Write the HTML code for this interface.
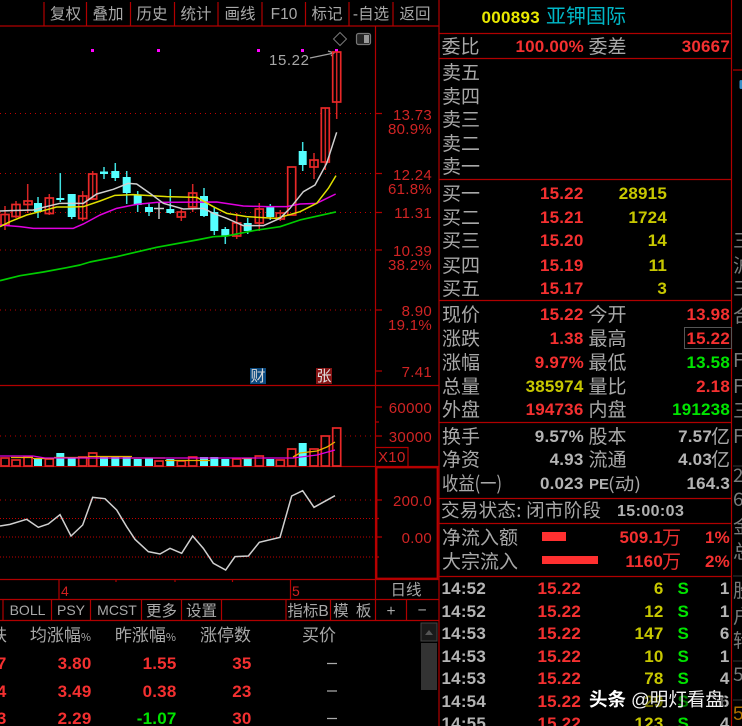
<!DOCTYPE html>
<html><head><meta charset="utf-8"><style>
html,body{margin:0;padding:0;background:#000;width:742px;height:726px;overflow:hidden}
svg{display:block}
text{font-family:"Liberation Sans","Noto Sans CJK SC",sans-serif}
.t{font-family:"Liberation Sans","Noto Sans CJK SC",sans-serif;font-size:15.5px;fill:#a8a8a8;text-anchor:middle}
.a{font-size:15px;fill:#d02424;text-anchor:end;letter-spacing:.3px}
.l{font-family:"Noto Sans CJK SC",sans-serif;font-size:19px;fill:#a8a8a8}
.n{font-weight:bold;font-size:17px;text-anchor:end;letter-spacing:.2px}
.R{fill:#f43030}.Y{fill:#c8c800}.G{fill:#00e400}.W{fill:#b4b4b4}
.h{font-family:"Noto Sans CJK SC",sans-serif;font-size:17px;fill:#a8a8a8;text-anchor:end}
.h tspan{font-size:11px}
.ln{stroke:#b00000;stroke-width:1.200;fill:none}
.d{stroke:#c00000;stroke-width:1;stroke-dasharray:1 4;fill:none}
.rb{fill:none;stroke:#e82828;stroke-width:1.700}
.cb{fill:#55ffff}
.s{font-family:"Noto Sans CJK SC",sans-serif;font-size:19px;fill:#7a7a7a}
</style></head><body>
<svg width="742" height="726" viewBox="0 0 742 726" xmlns="http://www.w3.org/2000/svg">
<rect width="742" height="726" fill="#000"/>

<!-- toolbar -->
<path class="ln" d="M0 26H439M44 2V26M86.500 2V26M130.500 2V26M174.500 2V26M218 2V26M262 2V26M305.500 2V26M349 2V26M393 2V26"/>
<text class="t" x="65.500" y="19">复权</text><text class="t" x="108" y="19">叠加</text><text class="t" x="152" y="19">历史</text><text class="t" x="196" y="19">统计</text><text class="t" x="240" y="19">画线</text><text class="t" x="284" y="19">F10</text><text class="t" x="327" y="19">标记</text><text class="t" x="371" y="19">-自选</text><text class="t" x="415" y="19">返回</text>

<!-- frame -->
<path class="ln" d="M375.500 26V600M0 385.500H439M0 466.500H439M0 579.500H439M0 599.500H439M0 620.500H439"/>
<path d="M376.500 467.500H437.500V578.500H376.500Z" fill="none" stroke="#b80000" stroke-width="1.800"/>
<path class="ln" d="M376 447.500H408V466"/>
<path class="ln" d="M439 0V726M731.500 0V726M439 33.500H731M439 58.500H731M439 179.500H731M439 300.500H731M439 422.500H731M439 498.500H731M439 523.500H731M439 576.500H731"/>

<!-- dotted grid -->
<path class="d" d="M0 113.500H375M0 173.500H375M0 212.500H375M0 250H375M0 310H375M0 436H375M0 500H375"/>
<path d="M0 518.500H376M0 537H376M0 557H376" stroke="#c00000" stroke-width="1" stroke-dasharray="1 2" fill="none"/>
<path class="ln" d="M376 113.500H382M376 173.500H382M376 212.500H382M376 250H382M376 310H382M376 371H382M376 407H382M376 422H379M376 436H382M376 500H382M376 518.500H379M376 537H382M376 557H379"/>

<!-- axis labels -->
<text class="a" x="432" y="120">13.73</text><text class="a" x="432" y="134">80.9%</text>
<text class="a" x="432" y="180">12.24</text><text class="a" x="432" y="194">61.8%</text>
<text class="a" x="432" y="218">11.31</text>
<text class="a" x="432" y="256">10.39</text><text class="a" x="432" y="270">38.2%</text>
<text class="a" x="432" y="316">8.90</text><text class="a" x="432" y="330">19.1%</text>
<text class="a" x="432" y="377">7.41</text>
<text class="a" x="432" y="413">60000</text><text class="a" x="432" y="442">30000</text>
<text class="a" x="378" y="462" style="text-anchor:start">X10</text>
<text class="a" x="432" y="506">200.0</text><text class="a" x="432" y="543">0.00</text>

<!-- high marker -->
<text x="269" y="65" style="font-size:15px;fill:#a8a8a8;letter-spacing:.6px">15.22</text>
<path d="M310 58L334 53M328 51L334 53L331 56" stroke="#a0a0a0" stroke-width="1.200" fill="none"/>
<path d="M340 32.500L346.500 39L340 45.500L333.500 39Z" fill="none" stroke="#777" stroke-width="1"/>
<rect x="356.500" y="33.500" width="14" height="11" rx="2" fill="#222" stroke="#777" stroke-width="1.200"/><rect x="364" y="35" width="5" height="8" fill="#999"/>
<g fill="#ff00ff"><rect x="91" y="49" width="3" height="3"/><rect x="157" y="49" width="3" height="3"/><rect x="257" y="49" width="3" height="3"/><rect x="301" y="49" width="3" height="3"/><rect x="335" y="49" width="3" height="3"/></g>

<!-- wicks -->
<path stroke="#d42424" stroke-width="1.500" fill="none" d="M5 206V230M16 201V218M27.700 184V213M49.300 194V215M82.700 191V221M92.700 171V200M181.300 209V221M192.700 184V212M236.700 213V239M259.300 203V231M280.300 210V221M314 153V179M325.300 108V170M336.700 52V119"/>
<path stroke="#40e0e0" stroke-width="1.500" fill="none" d="M38 197V218M60.300 173V202M71.700 194V219M104 167V179M115.300 163V181M126.700 171V204M137.700 191V212M149 203V216M170.300 189V214M204 188V217M214.300 207V235M225.300 227V244M247.700 218V234M270.300 204V220M302.700 142V171"/>
<path stroke="#d0d0d0" stroke-width="1.400" fill="none" d="M159 202V219M154 208.500H164"/>
<!-- bodies -->
<g class="rb">
<rect x="1" y="214.500" width="8" height="10.500"/><rect x="12" y="204.500" width="8" height="12"/><rect x="24" y="201" width="8" height="3.500"/><rect x="45.300" y="198" width="8" height="15.500"/><rect x="78.700" y="196" width="8" height="22.500"/><rect x="88.700" y="174" width="8" height="25"/><rect x="177.300" y="212" width="8" height="5"/><rect x="188.700" y="193" width="8" height="14"/><rect x="232.700" y="223" width="8" height="13"/><rect x="255.300" y="209" width="8" height="14"/><rect x="276.300" y="213" width="8" height="6"/><rect x="287.700" y="167" width="8" height="48"/><rect x="310" y="160" width="8" height="7"/><rect x="321.300" y="108" width="8" height="54"/><rect x="332.700" y="52" width="8" height="50"/>
</g>
<g class="cb">
<rect x="34" y="203" width="8" height="9"/><rect x="56.300" y="198" width="8" height="2"/><rect x="67.700" y="194" width="8" height="23"/><rect x="100" y="171.500" width="8" height="2.500"/><rect x="111.300" y="171" width="8" height="7"/><rect x="122.700" y="177" width="8" height="16"/><rect x="133.700" y="195" width="8" height="10"/><rect x="145" y="207" width="8" height="5"/><rect x="166.300" y="209" width="8" height="4"/><rect x="200" y="196" width="8" height="20"/><rect x="210.300" y="212" width="8" height="19"/><rect x="221.300" y="229" width="8" height="7"/><rect x="243.700" y="223" width="8" height="8"/><rect x="266.300" y="207" width="8" height="10"/><rect x="298.700" y="151" width="8" height="14"/>
</g>

<!-- moving averages -->
<g transform="scale(.33333)" fill="none" stroke-width="4.500" stroke-linejoin="round">
<polyline stroke="#00cc00" stroke-width="5" points="0,842 60,827 130,816 200,803 240,795 270,786 350,770 470,742 590,720 640,710 680,708 760,692 840,680 900,660 1008,636"/>
<polyline stroke="#e000e0" points="0,675 60,680 100,685 220,685 250,672 300,645 350,625 410,613 470,607 650,606 730,618 800,620 860,620 900,612 950,610 1007,582"/>
<polyline stroke="#e0e000" points="0,680 30,665 80,645 130,632 170,621 210,621 250,620 300,603 345,586 400,584 500,590 590,592 640,620 680,640 740,650 830,655 900,635 950,610 985,565 1008,527"/>
<polyline stroke="#d0d0d0" points="0,633 30,632 100,630 130,622 180,610 250,610 290,582 340,568 385,550 410,552 450,580 490,610 550,627 610,625 640,640 680,655 730,677 790,677 840,655 870,625 910,575 945,555 980,490 1010,397"/>
</g>

<!-- badges -->
<rect x="250" y="368" width="16" height="16" fill="#0b4a80"/><text x="258" y="381" style="font-size:15px;fill:#d8d8d8;text-anchor:middle">财</text>
<rect x="316" y="368" width="16" height="16" fill="#861414"/><text x="324" y="381" style="font-size:15px;fill:#e0e0e0;text-anchor:middle">张</text>

<!-- volume -->
<g class="rb">
<rect x="1" y="458" width="8" height="8"/><rect x="12" y="460" width="8" height="6"/><rect x="24" y="457" width="8" height="9"/><rect x="45.300" y="459" width="8" height="7"/><rect x="78.700" y="457" width="8" height="9"/><rect x="88.700" y="453" width="8" height="13"/><rect x="155" y="461" width="8" height="5"/><rect x="177.300" y="461" width="8" height="5"/><rect x="188.700" y="457" width="8" height="9"/><rect x="232.700" y="459" width="8" height="7"/><rect x="255.300" y="456" width="8" height="10"/><rect x="276.300" y="460" width="8" height="6"/><rect x="287.700" y="449" width="8" height="17"/><rect x="310" y="449" width="8" height="17"/><rect x="321.300" y="436" width="8" height="30"/><rect x="332.700" y="428" width="8" height="38"/>
</g>
<g class="cb">
<rect x="34" y="458" width="8" height="8"/><rect x="56.300" y="453" width="8" height="13"/><rect x="67.700" y="458" width="8" height="8"/><rect x="100" y="457" width="8" height="9"/><rect x="111.300" y="457" width="8" height="9"/><rect x="122.700" y="457" width="8" height="9"/><rect x="133.700" y="459" width="8" height="7"/><rect x="145" y="458" width="8" height="8"/><rect x="166.300" y="459" width="8" height="7"/><rect x="200" y="457" width="8" height="9"/><rect x="210.300" y="457" width="8" height="9"/><rect x="221.300" y="459" width="8" height="7"/><rect x="243.700" y="459" width="8" height="7"/><rect x="266.300" y="459" width="8" height="7"/><rect x="298.700" y="443" width="8" height="23"/>
</g>
<path fill="none" stroke="#e8b000" stroke-width="1.300" d="M11 457.500H33M33 458.500H54M54 457.500H88M88 456.500H132M132 458H165M165 460.500H210M242 458.500H252M293 457L300 453L317 451L327 447L335 442"/>
<path fill="none" stroke="#e000e0" stroke-width="1.300" d="M0 456H33L45 458H293L317 455L335 450"/>

<!-- CCI -->
<g transform="translate(0 480) scale(.33333)"><polyline fill="none" stroke="#d0d0d0" stroke-width="4.500" points="0,138 30,133 80,118 115,142 145,132 180,104 213,168 248,135 278,52 315,56 350,90 380,140 405,178 445,215 480,222 510,205 545,220 578,168 610,205 640,250 677,270 705,230 745,228 778,187 840,172 875,48 908,32 942,82 1005,47"/></g>

<!-- date row -->
<path class="ln" d="M59 580V599M290.500 580V599M116 580V582M175 580V582M232.500 580V582"/>
<text x="61" y="596" style="font-size:14px;fill:#d02020">4</text><text x="292" y="596" style="font-size:14px;fill:#d02020">5</text>
<text class="t" x="406" y="595">日线</text>

<!-- tab row -->
<path class="ln" d="M3 600V620M51.500 600V620M90.500 600V620M141.500 600V620M181.500 600V620M221.500 600V620M286 600V620M330.500 600V620M375.500 600V620M406.500 600V620"/>
<text class="t" x="27.500" y="615" style="font-size:14px">BOLL</text><text class="t" x="71" y="615" style="font-size:14px">PSY</text><text class="t" x="117" y="615" style="font-size:14px">MCST</text><text class="t" x="161.500" y="616">更多</text><text class="t" x="201.500" y="616">设置</text><text class="t" x="308" y="616">指标B</text><text class="t" x="353" y="616" style="letter-spacing:1.500px">模 板</text><text class="t" x="391" y="616">+</text><text class="t" x="422" y="615">−</text>

<!-- table -->
<text class="h" x="7" y="641">跌</text><text class="h" x="91" y="641">均涨幅<tspan>%</tspan></text><text class="h" x="176" y="641">昨涨幅<tspan>%</tspan></text><text class="h" x="251" y="641">涨停数</text><text class="h" x="336" y="641">买价</text>
<text class="n R" x="6.500" y="669">7</text><text class="n R" x="91.500" y="669">3.80</text><text class="n R" x="176.500" y="669">1.55</text><text class="n R" x="251.500" y="669">35</text>
<text class="n R" x="6.500" y="697">4</text><text class="n R" x="91.500" y="697">3.49</text><text class="n R" x="176.500" y="697">0.38</text><text class="n R" x="251.500" y="697">23</text>
<text class="n R" x="6.500" y="724">3</text><text class="n R" x="91.500" y="724">2.29</text><text class="n G" x="176.500" y="724">-1.07</text><text class="n R" x="251.500" y="724">30</text>
<path d="M327 663.500H337M327 691H337M327 718.500H337" stroke="#aaa" stroke-width="1.200"/>
<rect x="421" y="623" width="16" height="18" fill="#1a1a1a" stroke="#444"/><path d="M425 635L429 630L433 635Z" fill="#555"/><rect x="421" y="643" width="16" height="47" fill="#333"/>

<!-- stock title -->
<text x="481.500" y="23" style="font-weight:bold;font-size:17px;fill:#e8e800;letter-spacing:.3px">000893</text>
<text x="546" y="23" style="font-family:'Noto Sans CJK SC',sans-serif;font-size:20px;fill:#00b8c8">亚钾国际</text>

<!-- quotes -->
<text class="l" x="441.500" y="53">委比</text><text class="n R" x="584" y="52">100.00%</text><text class="l" x="588.500" y="53">委差</text><text class="n R" x="730" y="52">30667</text>
<text class="l" x="442" y="79">卖五</text><text class="l" x="442" y="103">卖四</text><text class="l" x="442" y="126">卖三</text><text class="l" x="442" y="150">卖二</text><text class="l" x="442" y="173">卖一</text>
<text class="l" x="442" y="200">买一</text><text class="n R" x="583.500" y="199">15.22</text><text class="n Y" x="667" y="199">28915</text>
<text class="l" x="442" y="224">买二</text><text class="n R" x="583.500" y="223">15.21</text><text class="n Y" x="667" y="223">1724</text>
<text class="l" x="442" y="247">买三</text><text class="n R" x="583.500" y="246">15.20</text><text class="n Y" x="667" y="246">14</text>
<text class="l" x="442" y="272">买四</text><text class="n R" x="583.500" y="271">15.19</text><text class="n Y" x="667" y="271">11</text>
<text class="l" x="442" y="295">买五</text><text class="n R" x="583.500" y="294">15.17</text><text class="n Y" x="667" y="294">3</text>

<text class="l" x="442" y="321">现价</text><text class="n R" x="583.500" y="320">15.22</text><text class="l" x="588.500" y="321">今开</text><text class="n R" x="730" y="320">13.98</text>
<text class="l" x="442" y="345">涨跌</text><text class="n R" x="583.500" y="344">1.38</text><text class="l" x="588.500" y="345">最高</text><rect x="684.500" y="327.500" width="47" height="21" fill="none" stroke="#555"/><text class="n R" x="730" y="344">15.22</text>
<text class="l" x="442" y="369">涨幅</text><text class="n R" x="584" y="368">9.97%</text><text class="l" x="588.500" y="369">最低</text><text class="n G" x="730" y="368">13.58</text>
<text class="l" x="442" y="393">总量</text><text class="n Y" x="583.500" y="392">385974</text><text class="l" x="588.500" y="393">量比</text><text class="n R" x="730" y="392">2.18</text>
<text class="l" x="442" y="416">外盘</text><text class="n R" x="583.500" y="415">194736</text><text class="l" x="588.500" y="416">内盘</text><text class="n G" x="730" y="415">191238</text>

<text class="l" x="442" y="443">换手</text><text class="n W" x="584" y="442">9.57%</text><text class="l" x="588.500" y="443">股本</text><text class="n W" x="712" y="442">7.57</text><text class="l" x="711" y="443">亿</text>
<text class="l" x="442" y="466">净资</text><text class="n W" x="583.500" y="465">4.93</text><text class="l" x="588.500" y="466">流通</text><text class="n W" x="712" y="465">4.03</text><text class="l" x="711" y="466">亿</text>
<text class="l" x="442" y="490" textLength="60" lengthAdjust="spacingAndGlyphs">收益(一)</text><text class="n W" x="583.500" y="489">0.023</text><text x="589" y="489" style="font-weight:bold;font-size:15px;fill:#b0b0b0">PE</text><text class="l" x="608" y="490" style="font-size:17px" textLength="33" lengthAdjust="spacingAndGlyphs">(动)</text><text class="n W" x="730" y="489">164.3</text>

<text class="l" x="441" y="517" style="font-size:18.500px;letter-spacing:.3px">交易状态: 闭市阶段</text>
<text x="617" y="516" style="font-weight:bold;font-size:16px;fill:#b0b0b0;letter-spacing:.4px">15:00:03</text>

<text class="l" x="442" y="544">净流入额</text><rect x="542" y="532" width="24" height="9" fill="#ff3030"/><text class="n R" x="663" y="543">509.1</text><text class="l" x="662" y="544" style="fill:#f03030">万</text><text class="n R" x="730" y="543">1%</text>
<text class="l" x="442" y="568">大宗流入</text><rect x="542" y="556" width="56" height="8" fill="#ff3030"/><text class="n R" x="663" y="567">1160</text><text class="l" x="662" y="568" style="fill:#f03030">万</text><text class="n R" x="730" y="567">2%</text>

<!-- ticks -->
<g>
<text class="n W" x="486" y="594">14:52</text><text class="n R" x="581" y="594">15.22</text><text class="n Y" x="663.500" y="594">6</text><text class="n G" x="689" y="594">S</text><text class="n W" x="729.500" y="594">1</text>
<text class="n W" x="486" y="617">14:52</text><text class="n R" x="581" y="617">15.22</text><text class="n Y" x="663.500" y="617">12</text><text class="n G" x="689" y="617">S</text><text class="n W" x="729.500" y="617">1</text>
<text class="n W" x="486" y="639">14:53</text><text class="n R" x="581" y="639">15.22</text><text class="n Y" x="663.500" y="639">147</text><text class="n G" x="689" y="639">S</text><text class="n W" x="729.500" y="639">6</text>
<text class="n W" x="486" y="662">14:53</text><text class="n R" x="581" y="662">15.22</text><text class="n Y" x="663.500" y="662">10</text><text class="n G" x="689" y="662">S</text><text class="n W" x="729.500" y="662">1</text>
<text class="n W" x="486" y="684">14:53</text><text class="n R" x="581" y="684">15.22</text><text class="n Y" x="663.500" y="684">78</text><text class="n G" x="689" y="684">S</text><text class="n W" x="729.500" y="684">4</text>
<text class="n W" x="486" y="707">14:54</text><text class="n R" x="581" y="707">15.22</text><text class="n Y" x="663.500" y="707">29</text><text class="n G" x="689" y="707">S</text><text class="n W" x="729.500" y="707">6</text>
<text class="n W" x="486" y="729">14:55</text><text class="n R" x="581" y="729">15.22</text><text class="n Y" x="663.500" y="729">123</text><text class="n G" x="689" y="729">S</text><text class="n W" x="729.500" y="729">4</text>
</g>

<!-- watermark -->
<rect x="630" y="690" width="95" height="20" fill="#000" opacity=".45"/>
<text x="589" y="706" style="font-family:'Noto Sans CJK SC',sans-serif;font-size:18.500px;fill:#fff;font-weight:bold">头条</text>
<text x="631" y="706" style="font-family:'Liberation Sans','Noto Sans CJK SC',sans-serif;font-size:18.500px;fill:#f4f4f4">@明灯看盘</text>

<!-- clipped neighbouring panel -->
<path class="ln" d="M733 70H742"/>
<rect x="739.500" y="80" width="3" height="9" rx="1.500" fill="#3a90c8"/>
<g class="s">
<text x="733" y="247" class="s">三</text><text x="733" y="272" class="s">沪</text><text x="733" y="295" class="s">三</text><text x="733" y="322" class="s">合</text>
<text x="733" y="367" class="s">F</text><text x="733" y="393" class="s">F</text><text x="733" y="417" class="s">三</text><text x="733" y="443" class="s">F</text>
<text x="733" y="482" class="s">2</text><text x="733" y="506" class="s">6</text><text x="733" y="533" class="s">金</text><text x="733" y="558" class="s">总</text>
<text x="733" y="597" class="s">股</text><text x="733" y="623" class="s">户</text><text x="733" y="647" class="s">转</text><text x="733" y="681" class="s">5</text>
<text x="733" y="720" style="font-size:19px;fill:#b07000">5</text>
</g>
<path d="M733 466H742M733 576H742M733 661H742M733 700H742" stroke="#333"/>
</svg>
</body></html>
